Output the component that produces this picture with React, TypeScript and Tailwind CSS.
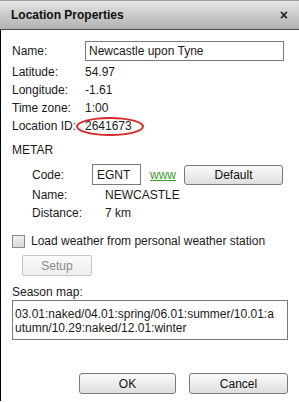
import React from "react";

const btn =
  "flex items-center justify-center rounded-[3px] border border-[#7a7a7a] bg-gradient-to-b from-[#fbfbfb] to-[#dedede] text-[12px] text-[#111]";

function Row({ label, value }: { label: string; value: string }) {
  return (
    <div className="flex h-[18px] items-center">
      <span className="w-[73px] shrink-0">{label}</span>
      <span>{value}</span>
    </div>
  );
}

export default function App() {
  return (
    <div className="relative h-[402px] w-[299px] overflow-hidden bg-white font-['Liberation_Sans',Arial,sans-serif] text-[12px] leading-[14px] text-[#1a1a1a]">
      {/* title bar */}
      <div className="flex h-[30px] items-center justify-between border-t border-b border-t-[#a0a0a0] border-b-[#4a4a4a] bg-gradient-to-b from-[#e4e4e4] to-[#b2b2b2] pl-[11px] pr-[11px]">
        <span className="text-[12px] font-bold text-[#111]">Location Properties</span>
        <span className="text-[14px] font-bold leading-none text-[#222]">×</span>
      </div>

      <div className="flex h-[371px] flex-col border-l border-black pl-[11px]">
        {/* name */}
        <div className="mt-[11px] flex h-[20px] items-center">
          <span className="w-[73px] shrink-0">Name:</span>
          <div className="flex h-[20px] w-[199px] items-center border border-[#7a7a7a] pl-[3px]">
            Newcastle upon Tyne
          </div>
        </div>
        <div className="mt-[2px]">
          <Row label="Latitude:" value="54.97" />
          <Row label="Longitude:" value="-1.61" />
          <Row label="Time zone:" value="1:00" />
          <Row label="Location ID:" value="2641673" />
        </div>

        <div className="mt-[6px] flex h-[18px] items-center">METAR</div>

        {/* metar block */}
        <div className="mt-[5px] pl-[20px]">
          <div className="flex h-[21px] items-center">
            <span className="w-[60px] shrink-0">Code:</span>
            <div className="flex h-[21px] w-[49px] items-center border border-[#7a7a7a] pl-[4px]">
              EGNT
            </div>
            <span className="ml-[9px] text-[#3c9a2c] underline decoration-[#3c9a2c]">www</span>
            <div className={`${btn} ml-[8px] h-[20px] w-[99px]`}>Default</div>
          </div>
          <div className="mt-[1px]">
            <Row label="Name:" value="NEWCASTLE" />
            <Row label="Distance:" value="7 km" />
          </div>
        </div>

        {/* checkbox */}
        <div className="mt-[12px] flex h-[14px] items-center">
          <div className="h-[13px] w-[13px] border border-[#8a8a8a] bg-gradient-to-b from-[#f0f0f0] to-[#dcdcdc]" />
          <span className="ml-[6px]">Load weather from personal weather station</span>
        </div>

        <div className="ml-[10px] mt-[7px] flex h-[21px] w-[70px] items-center justify-center rounded-[2px] border border-[#c4c4c4] bg-gradient-to-b from-[#fafafa] to-[#eeeeee] text-[#8a8a8a]">
          Setup
        </div>

        <div className="mt-[9px] flex h-[14px] items-center">Season map:</div>
        <div className="mt-[1px] h-[40px] w-[276px] border border-[#7a7a7a] px-[2px] pt-[6px] leading-[14px]">
          03.01:naked/04.01:spring/06.01:summer/10.01:a
          <br />
          utumn/10.29:naked/12.01:winter
        </div>

        {/* footer buttons */}
        <div className="mt-[33px] flex justify-end gap-[13px] pr-[11px]">
          <div className={`${btn} h-[21px] w-[97px]`}>OK</div>
          <div className={`${btn} h-[21px] w-[99px]`}>Cancel</div>
        </div>
      </div>

      {/* red annotation ellipse */}
      <div className="absolute left-[76px] top-[117px] h-[19px] w-[68px] rounded-[50%] border-2 border-[#d42a2a]" />
    </div>
  );
}
